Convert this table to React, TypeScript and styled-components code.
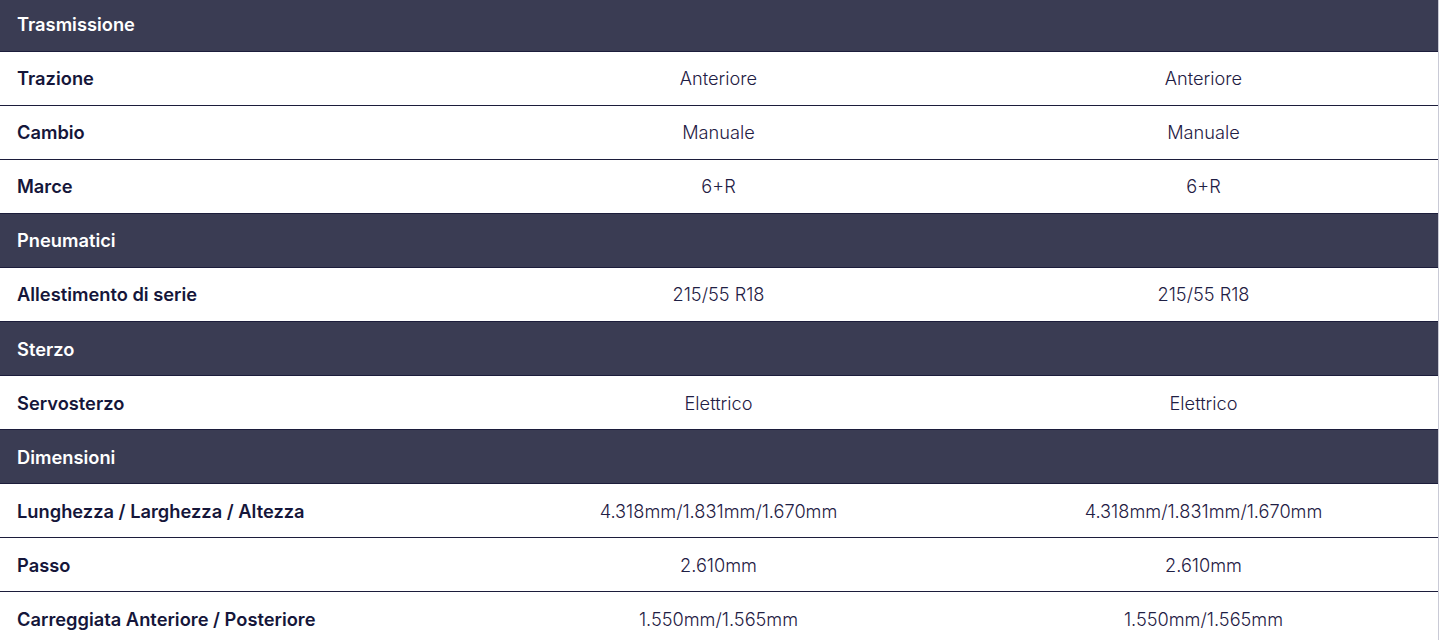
import React from "react";
import styled, { createGlobalStyle } from "styled-components";

const Global = createGlobalStyle`
  html, body { margin: 0; padding: 0; background: #ffffff; }
  body { font-family: Inter, "Noto Sans", sans-serif; overflow: hidden; }
`;

const Table = styled.div`
  width: 1439px;
  margin-top: -2.5px;
  display: flex;
  flex-direction: column;
  border-right: 1px solid #c9cad6;
  box-sizing: border-box;
`;

const Row = styled.div<{ $section?: boolean }>`
  display: grid;
  grid-template-columns: 468px 1fr 1fr;
  align-items: center;
  height: 54.08px;
  box-sizing: border-box;
  border-bottom: 1px solid #1c1d3b;
  background: ${(p) => (p.$section ? "#3a3c53" : "#ffffff")};
`;

const Label = styled.div<{ $section?: boolean }>`
  padding-left: 17px;
  font-size: 18.3px;
  font-weight: 600;
  color: ${(p) => (p.$section ? "#ffffff" : "#15163a")};
`;

const Value = styled.div`
  padding-left: 16px;
  text-align: center;
  font-size: 18.2px;
  font-weight: 300;
  color: #1f2044;
`;

type Item =
  | { kind: "section"; title: string }
  | { kind: "row"; label: string; a: string; b: string };

const data: Item[] = [
  { kind: "section", title: "Trasmissione" },
  { kind: "row", label: "Trazione", a: "Anteriore", b: "Anteriore" },
  { kind: "row", label: "Cambio", a: "Manuale", b: "Manuale" },
  { kind: "row", label: "Marce", a: "6+R", b: "6+R" },
  { kind: "section", title: "Pneumatici" },
  { kind: "row", label: "Allestimento di serie", a: "215/55 R18", b: "215/55 R18" },
  { kind: "section", title: "Sterzo" },
  { kind: "row", label: "Servosterzo", a: "Elettrico", b: "Elettrico" },
  { kind: "section", title: "Dimensioni" },
  {
    kind: "row",
    label: "Lunghezza / Larghezza / Altezza",
    a: "4.318mm/1.831mm/1.670mm",
    b: "4.318mm/1.831mm/1.670mm",
  },
  { kind: "row", label: "Passo", a: "2.610mm", b: "2.610mm" },
  {
    kind: "row",
    label: "Carreggiata Anteriore / Posteriore",
    a: "1.550mm/1.565mm",
    b: "1.550mm/1.565mm",
  },
];

export default function App() {
  return (
    <>
      <Global />
      <Table>
        {data.map((d, i) =>
          d.kind === "section" ? (
            <Row key={i} $section>
              <Label $section>{d.title}</Label>
              <div />
              <div />
            </Row>
          ) : (
            <Row key={i}>
              <Label>{d.label}</Label>
              <Value>{d.a}</Value>
              <Value>{d.b}</Value>
            </Row>
          )
        )}
      </Table>
    </>
  );
}
